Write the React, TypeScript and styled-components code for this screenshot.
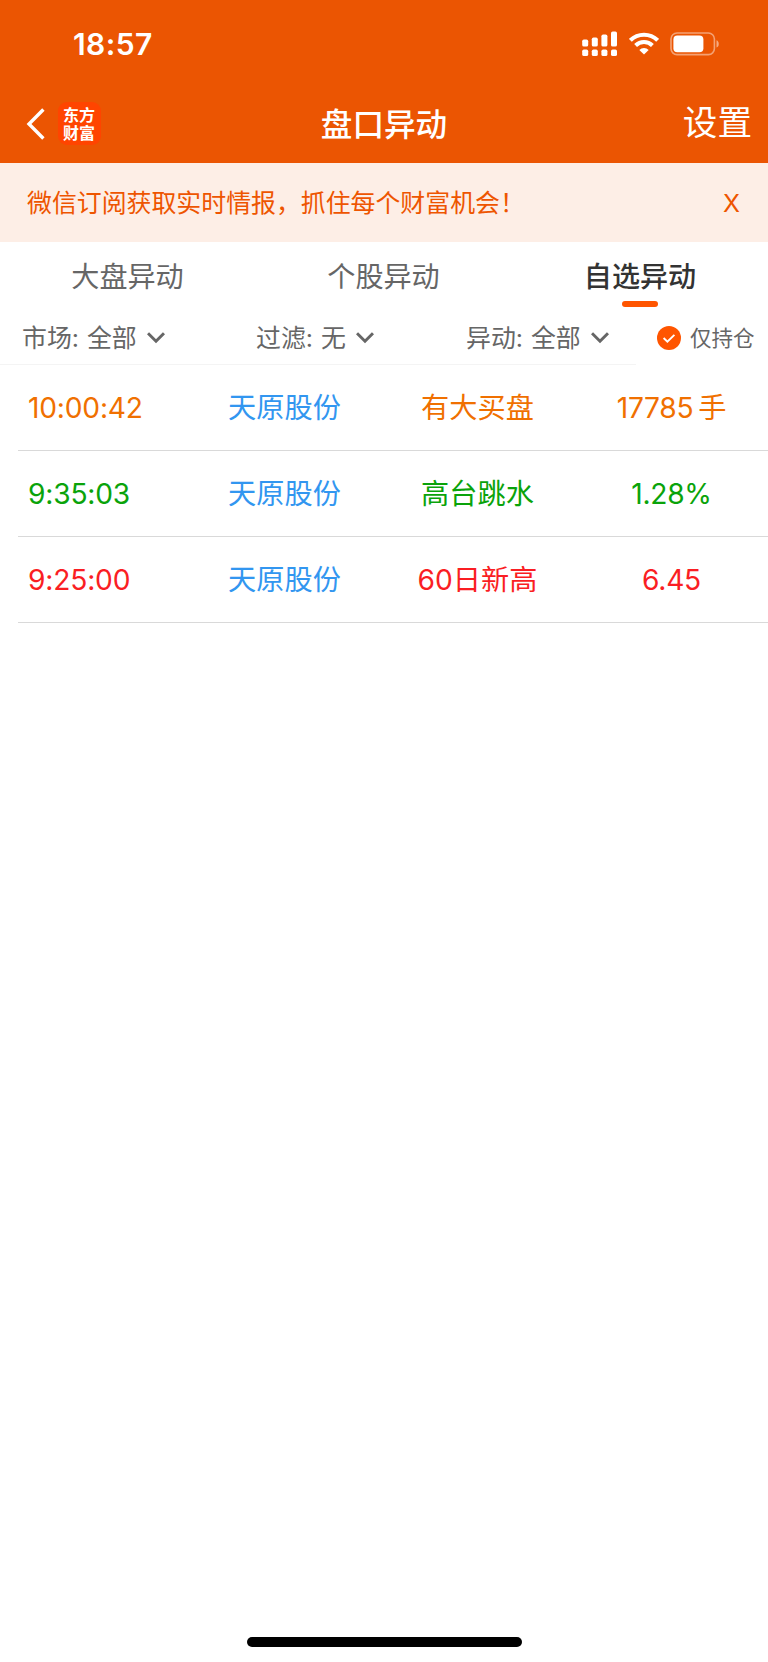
import React from "react";
import styled, { createGlobalStyle } from "styled-components";

const GlobalStyle = createGlobalStyle`
  * { box-sizing: border-box; }
  body {
    margin: 0;
    background: #fff;
    font-family: Inter, "Noto Sans CJK SC", sans-serif;
  }
`;

const Screen = styled.div`
  width: 768px;
  height: 1662px;
  display: flex;
  flex-direction: column;
  background: #fff;
  overflow: hidden;
  white-space: nowrap;
`;

const Header = styled.header`
  height: 163px;
  flex: none;
  background: #eb5502;
  color: #fff;
`;

const StatusBar = styled.div`
  height: 87px;
  display: flex;
  align-items: center;
  justify-content: space-between;
  padding: 0 48px 0 73px;
`;

const Clock = styled.span`
  font-size: 30px;
  font-weight: 600;
  line-height: 36px;
  letter-spacing: 0.4px;
`;

const StatusIcons = styled.div`
  display: flex;
  align-items: center;
  gap: 11px;
`;

const NavBar = styled.div`
  height: 76px;
  display: grid;
  grid-template-columns: 200px 1fr 200px;
  align-items: center;
`;

const NavLeft = styled.div`
  display: flex;
  align-items: center;
  gap: 13px;
  padding: 0 0 3px 25.5px;
`;

const Logo = styled.div`
  width: 43px;
  height: 43px;
  padding-top: 4px;
  border-radius: 9px;
  background: #ff4400;
  text-align: center;
  font-family: "Noto Sans CJK SC", sans-serif;
  font-size: 16px;
  font-weight: 700;
  line-height: 17.5px;
`;

const Title = styled.h1`
  margin: 0;
  padding-bottom: 1px;
  text-align: center;
  font-size: 31.6px;
  font-weight: 500;
  line-height: 44px;
`;

const Settings = styled.span`
  text-align: right;
  padding: 0 16px 6px 0;
  font-size: 34.6px;
  line-height: 44px;
`;

const Banner = styled.div`
  height: 79px;
  flex: none;
  display: flex;
  align-items: center;
  justify-content: space-between;
  padding: 0 28px 0 27px;
  background: #fdeee6;
  color: #ee5500;
  font-size: 24.9px;
  line-height: 36px;
`;

const Tabs = styled.nav`
  height: 70px;
  flex: none;
  display: grid;
  grid-template-columns: 255px 257px 256px;
`;

const Tab = styled.div<{ $active?: boolean }>`
  display: flex;
  flex-direction: column;
  align-items: center;
  padding-top: 15px;
  font-size: 28.1px;
  line-height: 40px;
  font-weight: ${(p) => (p.$active ? 500 : 400)};
  color: ${(p) => (p.$active ? "#333" : "#666")};
`;

const Underline = styled.i`
  width: 36px;
  height: 6px;
  margin-top: 4px;
  border-radius: 3px;
  background: #ff5500;
`;

const FilterBar = styled.div`
  height: 53px;
  flex: none;
  display: grid;
  grid-template-columns: 636px 1fr;
`;

const Filters = styled.div`
  display: grid;
  grid-template-columns: 234px 210px 1fr;
  padding-left: 22px;
  border-bottom: 1px solid #f4f4f4;
`;

const Filter = styled.div`
  display: flex;
  align-items: center;
  height: 52px;
  color: #666;
  font-size: 24.9px;
  line-height: 36px;
`;

const FilterValue = styled.span`
  margin: 0 10px 0 8px;
`;

const HoldOnly = styled.div`
  display: flex;
  align-items: center;
  height: 52px;
  gap: 9px;
  padding-left: 21px;
  color: #666;
  font-size: 21.5px;
  line-height: 32px;
`;

const List = styled.div`
  margin-left: 18px;
`;

const Row = styled.div<{ $color: string }>`
  height: 86px;
  display: grid;
  grid-template-columns: 170px 193px 193px 194px;
  align-items: center;
  border-bottom: 1px solid #d9d9d9;
  color: ${(p) => p.$color};
  font-size: 28.2px;
  line-height: 40px;
  text-align: center;
`;

const Time = styled.span`
  text-align: left;
  padding-left: 10px;
  letter-spacing: -0.2px;
`;

const Stock = styled.span`
  color: #3296f0;
`;

const Value = styled.span`
  padding-left: 1px;
  letter-spacing: -0.3px;
`;

const Unit = styled.span`
  margin-left: 5px;
`;

const HomeBar = styled.div`
  width: 275px;
  height: 10px;
  margin: auto auto 15px 247px;
  border-radius: 5px;
  background: #000;
`;

const Chevron = () => (
  <svg width="18" height="12" viewBox="0 0 18 12" fill="none" stroke="#666" strokeWidth="3">
    <path d="M1 1.2 9 9.2 17 1.2" />
  </svg>
);

const SignalIcon = () => (
  <svg width="36" height="26" viewBox="0 0 36 26" fill="#fff">
    {[8, 6, 3, 0].map((top, i) => (
      <React.Fragment key={top}>
        <rect x={0.2 + i * 9.6} y={top + 0.6} width="6" height={15 - top} rx="1.7" />
        <rect x={0.2 + i * 9.6} y="18.5" width="6" height="6.6" rx="1.7" />
      </React.Fragment>
    ))}
  </svg>
);

const WifiIcon = () => (
  <svg width="30" height="23" viewBox="0 0 30 23" fill="none" stroke="#fff" strokeWidth="4">
    <path d="M1.4 8.3a19.4 19.4 0 0 1 27.2 0" />
    <path d="M6.6 13.5a12 12 0 0 1 16.8 0" />
    <path d="M15 22.6 10.3 18a6.8 6.8 0 0 1 9.4 0Z" fill="#fff" stroke="none" />
  </svg>
);

const BatteryIcon = () => (
  <svg width="50" height="24" viewBox="0 0 50 24" fill="none">
    <rect x="1" y="1" width="43.4" height="21.6" rx="6" stroke="#fff" strokeOpacity=".45" strokeWidth="1.6" />
    <rect x="3.4" y="3.6" width="30" height="16.6" rx="4" fill="#fff" />
    <path d="M46.5 8.2c3 1 3 6.4 0 7.4Z" fill="#fff" fillOpacity=".5" />
  </svg>
);

const rows = [
  { time: "10:00:42", stock: "天原股份", event: "有大买盘", value: "17785", unit: "手", color: "#f07000" },
  { time: "9:35:03", stock: "天原股份", event: "高台跳水", value: "1.28%", color: "#0aa30a" },
  { time: "9:25:00", stock: "天原股份", event: "60日新高", value: "6.45", color: "#fa1e23" },
];

const filters = [
  ["市场:", "全部"],
  ["过滤:", "无"],
  ["异动:", "全部"],
];

export default function App() {
  return (
    <>
      <GlobalStyle />
      <Screen>
        <Header>
          <StatusBar>
            <Clock>18:57</Clock>
            <StatusIcons>
              <SignalIcon />
              <WifiIcon />
              <BatteryIcon />
            </StatusIcons>
          </StatusBar>
          <NavBar>
            <NavLeft>
              <svg width="19" height="32" viewBox="0 0 19 32" fill="none" stroke="#fff" strokeWidth="3.4">
                <path d="M17.4 1.5 3 16 17.4 30.5" />
              </svg>
              <Logo>
                东方
                <br />
                财富
              </Logo>
            </NavLeft>
            <Title>盘口异动</Title>
            <Settings>设置</Settings>
          </NavBar>
        </Header>
        <Banner>
          <span>微信订阅获取实时情报，抓住每个财富机会！</span>
          <span>X</span>
        </Banner>
        <Tabs>
          <Tab>大盘异动</Tab>
          <Tab>个股异动</Tab>
          <Tab $active>
            自选异动
            <Underline />
          </Tab>
        </Tabs>
        <FilterBar>
          <Filters>
            {filters.map(([label, value]) => (
              <Filter key={label}>
                {label}
                <FilterValue>{value}</FilterValue>
                <Chevron />
              </Filter>
            ))}
          </Filters>
          <HoldOnly>
            <svg width="24" height="24" viewBox="0 0 24 24" fill="none">
              <circle cx="12" cy="12" r="12" fill="#ff5500" />
              <path d="m6.6 12 3.8 3.7 7-6.8" stroke="#fff" strokeWidth="1.9" />
            </svg>
            仅持仓
          </HoldOnly>
        </FilterBar>
        <List>
          {rows.map((r) => (
            <Row key={r.time} $color={r.color}>
              <Time>{r.time}</Time>
              <Stock>{r.stock}</Stock>
              <span>{r.event}</span>
              <Value>
                {r.value}
                {r.unit && <Unit>{r.unit}</Unit>}
              </Value>
            </Row>
          ))}
        </List>
        <HomeBar />
      </Screen>
    </>
  );
}
